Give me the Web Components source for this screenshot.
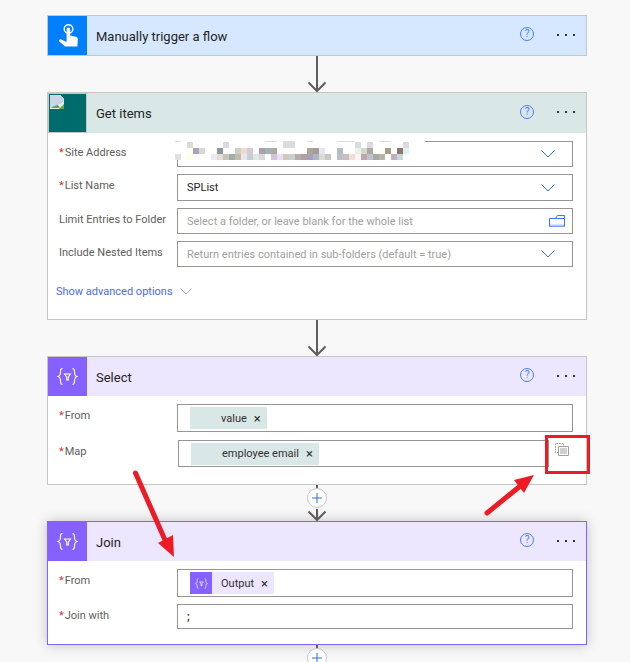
<!DOCTYPE html>
<html>
<head>
<meta charset="utf-8">
<title>Flow</title>
<style>
html, body { margin: 0; height: 662px; overflow: hidden; background: #f8f8f8; }
body { font-family: Roboto, "Open Sans", sans-serif; position: relative; }
flow-page { padding: 15px 0 0 47px; width: 540px; }
svg { display: block; }
</style>
</head>
<body>
<flow-page>
	<flow-card heading="Manually trigger a flow" accent="#007fff" tint="#d6e8ff" head="39">
		<svg slot="icon" width="24" height="26" viewBox="0 0 24 26">
			<circle cx="12.5" cy="6" r="4.3" fill="none" stroke="#fff" stroke-width="1.4"/>
			<path d="M10.6 6.2a1.8 1.8 0 0 1 3.6 0v6.4l5.6 1.2c1.5.4 2.1 1.3 2 2.7l-.4 7H9.2L3.4 18.4c-1-1.2.4-2.8 1.9-2l5.3 2.6z" fill="#fff"/>
		</svg>
	</flow-card>
	<flow-connector></flow-connector>
	<flow-card heading="Get items" accent="#006b6b" tint="#d9e7e6" head="40" framed>
		<svg slot="icon" width="37" height="38" viewBox="0 0 37 38">
			<path d="M1 1h10l4 4v10H1z" fill="#e8eef5"/>
			<path d="M11 1v4h4" fill="#fff" stroke="#a9b4c0" stroke-width=".8"/>
			<path d="M2 14l4-5 3 2 2 3z" fill="#5fa83f"/>
			<path d="M1 1h10l4 4-3 5-4 1-7 3z" fill="#c9d6e6"/>
			<path d="M10 15l5-5v5z" fill="#5fa83f"/>
		</svg>
		<flow-row label="Site Address" required h="26"><blur-patch></blur-patch><flow-chevron slot="end"></flow-chevron></flow-row>
		<flow-row label="List Name" required h="27"><span class="v">SPList</span><flow-chevron slot="end"></flow-chevron></flow-row>
		<flow-row label="Limit Entries to Folder" h="26" hint="Select a folder, or leave blank for the whole list">
			<svg slot="end" width="16" height="12" viewBox="0 0 16 12" fill="none" stroke="#3f74f5">
				<path d="M.5 3.5h15M.5 11.5V3.5M.5 11.5h15V.5H8.5l-2 3" />
				<path d="M1 10.5h14" stroke="#b6c8fb" stroke-width="2"/>
			</svg>
		</flow-row>
		<flow-row label="Include Nested Items" h="26" hint="Return entries contained in sub-folders (default = true)"><flow-chevron slot="end"></flow-chevron></flow-row>
		<flow-advanced slot="foot"></flow-advanced>
	</flow-card>
	<flow-connector></flow-connector>
	<flow-card heading="Select" accent="#8661ff" tint="#ece7fe" head="39" pad-bottom="17">
		<flow-funnel slot="icon"></flow-funnel>
		<flow-row label="From" required h="28" gap="8"><flow-token>value</flow-token></flow-row>
		<flow-row label="Map" required h="27" narrow>
			<flow-token>employee email</flow-token>
			<svg slot="after" width="14" height="13" viewBox="0 0 14 13" fill="none" stroke="#a19f9d">
				<path d="M3.5 9.5h-3v-9h8v2" stroke-dasharray="1.6 1"/>
				<path d="M3.5 3.5h10v9h-10zM5 6h7M5 8h7M5 10h7"/>
			</svg>
		</flow-row>
	</flow-card>
	<flow-connector plus></flow-connector>
	<flow-card heading="Join" accent="#8661ff" tint="#ece7fe" head="39" selected pad-bottom="15">
		<flow-funnel slot="icon"></flow-funnel>
		<flow-row label="From" required h="28"><flow-token variant="output">Output</flow-token></flow-row>
		<flow-row label="Join with" required h="25"><span class="v semi">;</span></flow-row>
	</flow-card>
	<flow-connector plus></flow-connector>
</flow-page>
<red-marks></red-marks>

<script>
class FlowPage extends HTMLElement {
	connectedCallback() {
		this.attachShadow({ mode: "open" }).innerHTML = `
			<style>:host { display: flex; flex-direction: column; }</style>
			<slot></slot>`;
	}
}

class FlowCard extends HTMLElement {
	getStyles() {
		const accent = this.getAttribute("accent");
		const selected = this.hasAttribute("selected");
		return `
			<style>
				:host {
					display: block;
					background: #fff;
					border: 1px solid ${selected ? "#8661ff" : "#c8c6c4"};
					${selected ? "box-shadow: 0 0 12px rgba(0,0,0,.22);" : ""}
				}
				header {
					display: flex;
					align-items: center;
					height: ${this.getAttribute("head")}px;
					background: ${this.getAttribute("tint")};
				}
				.icon {
					width: ${this.hasAttribute("framed") ? 37 : 39}px;
					height: ${this.hasAttribute("framed") ? 38 : 39}px;
					background: ${accent};
					display: flex;
					align-items: center;
					justify-content: center;
					flex: none;
					${this.hasAttribute("framed") ? "border: 1px solid #c8c6c4;" : ""}
				}
				h2 {
					flex: 1;
					margin: ${this.hasAttribute("framed") ? 0 : 2}px 0 0 9px;
					font: 400 13px Roboto, sans-serif;
					color: #252423;
				}
				.help {
					width: 12px;
					height: 12px;
					border: 1px solid #4a7eff;
					border-radius: 50%;
					color: #4a7eff;
					font: 400 10px/12px Roboto, sans-serif;
					text-align: center;
					margin-bottom: 3px;
				}
				.more {
					display: flex;
					gap: 6px;
					margin: 0 11px 2px 23px;
				}
				.more i { width: 2px; height: 2px; background: #323130; }
				main {
					display: flex;
					flex-direction: column;
					padding: 8px 13px ${this.getAttribute("pad-bottom") || 0}px 11px;
				}
			</style>`;
	}
	render() {
		const hasBody = this.querySelector("flow-row");
		this.shadowRoot.innerHTML = `
			${this.getStyles()}
			<header>
				<div class="icon"><slot name="icon"></slot></div>
				<h2>${this.getAttribute("heading")}</h2>
				<div class="help">?</div>
				<div class="more"><i></i><i></i><i></i></div>
			</header>
			${hasBody ? "<main><slot></slot></main>" : ""}
			<slot name="foot"></slot>`;
	}
	connectedCallback() {
		this.attachShadow({ mode: "open" });
		this.render();
	}
}

class FlowRow extends HTMLElement {
	connectedCallback() {
		const h = this.getAttribute("h");
		const hint = this.getAttribute("hint");
		const narrow = this.hasAttribute("narrow");
		const star = this.hasAttribute("required");
		const last = !this.nextElementSibling || this.nextElementSibling.tagName !== "FLOW-ROW";
		this.attachShadow({ mode: "open" }).innerHTML = `
			<style>
				:host {
					display: flex;
					align-items: flex-start;
					margin-bottom: ${last ? 0 : this.getAttribute("gap") || 7}px;
				}
				.label {
					width: 118px;
					flex: none;
					box-sizing: border-box;
					padding-top: 4px;
					font: 400 11px/16px Roboto, sans-serif;
					color: #605e5c;
					white-space: nowrap;
				}
				.label b { font-weight: 400; color: #d13438; margin-right: 1px; }
				.box {
					box-sizing: border-box;
					height: ${h}px;
					width: ${narrow ? 371 : 396}px;
					${narrow ? "margin-left: 1px;" : ""}
					flex: none;
					border: 1px solid #979593;
					background: #fff;
					display: flex;
					align-items: center;
					position: relative;
				}
				.content { flex: 1; padding-left: 9px; color: #252423; font: 400 11px Roboto, sans-serif; display: flex; align-items: center; height: 100%; }
				.hint { color: #a19f9d; }
				.end { margin-right: 7px; display: flex; }
				.after { margin: 3px 0 0 6px; }
				::slotted(flow-token) { margin-left: 3px; }
				::slotted(.semi) { color: #6b3410; font-weight: 700; }
			</style>
			<div class="label">${star ? "<b>*</b>" : ""}${this.getAttribute("label")}</div>
			<div class="box">
				<div class="content">${hint ? `<span class="hint">${hint}</span>` : "<slot></slot>"}</div>
				<div class="end"><slot name="end"></slot></div>
			</div>
			<div class="after"><slot name="after"></slot></div>`;
	}
}

class FlowChevron extends HTMLElement {
	connectedCallback() {
		const inline = this.hasAttribute("inline");
		this.attachShadow({ mode: "open" }).innerHTML = `
			<style>:host { display: block; margin-right: ${inline ? 0 : 10}px; } svg { display: block; }</style>
			<svg width="${inline ? 12 : 14}" height="${inline ? 7 : 8}" viewBox="0 0 14 8" fill="none" stroke="${this.getAttribute("color") || "#2a6fff"}">
				<path d="M.5.5L7 7l6.5-6.5"/>
			</svg>`;
	}
}

class FlowAdvanced extends HTMLElement {
	connectedCallback() {
		this.attachShadow({ mode: "open" }).innerHTML = `
			<style>
				:host {
					display: flex;
					align-items: center;
					gap: 7px;
					height: 52px;
					padding: 0 0 3px 8px;
					box-sizing: border-box;
					font: 400 11px Roboto, sans-serif;
					color: #4f6bed;
				}
			</style>
			<span>Show advanced options</span>
			<flow-chevron inline color="#8aa0f2"></flow-chevron>`;
	}
}

class FlowFunnel extends HTMLElement {
	connectedCallback() {
		const size = this.getAttribute("size") || 21;
		this.attachShadow({ mode: "open" }).innerHTML = `
			<style>:host { display: block; } svg { display: block; }</style>
			<svg width="${size}" height="${size}" viewBox="0 0 21 21" fill="none" stroke="#fff" stroke-width="1.1">
				<path d="M5.5 2.5c-1.8 0-2 1-2 3.2s-.3 4.2-2.5 4.8c2.200.600 2.500 2.600 2.500 4.800s.2 3.200 2 3.200"/>
				<path d="M15.500 2.500c1.800 0 2 1 2 3.200s.3 4.200 2.500 4.800c-2.200.600-2.500 2.600-2.500 4.800s-.2 3.200-2 3.200"/>
				<path d="M7.500 8h6l-2.200 3v3h-1.600v-3z"/>
			</svg>`;
	}
}

class FlowToken extends HTMLElement {
	connectedCallback() {
		const output = this.getAttribute("variant") === "output";
		this.attachShadow({ mode: "open" }).innerHTML = `
			<style>
				:host {
					display: flex;
					align-items: center;
					height: 22px;
					background: ${output ? "#ece7fe" : "#d9e7e6"};
					color: #323130;
					font: 400 11px Roboto, sans-serif;
				}
				.pic {
					width: 22px;
					height: 22px;
					margin-right: 9px;
					display: flex;
					align-items: center;
					justify-content: center;
					${output ? "background: #8661ff;" : ""}
				}
				.x { margin: 0 6px 0 7px; font-size: 13px; line-height: 1; }
			</style>
			<div class="pic">${output ? '<flow-funnel size="13"></flow-funnel>' : ""}</div>
			<slot></slot>
			<span class="x">×</span>`;
	}
}

class FlowConnector extends HTMLElement {
	connectedCallback() {
		const plus = this.hasAttribute("plus");
		this.attachShadow({ mode: "open" }).innerHTML = `
			<style>
				:host { display: block; height: 36px; position: relative; }
				svg { display: block; margin-left: 260px; overflow: visible; }
			</style>
			<svg width="20" height="36" viewBox="0 0 20 36" fill="none">
				${plus
					? `<path d="M10 0v5M10 24v11" stroke="#605e5c" stroke-width="2"/>
					   <circle cx="10" cy="13" r="9.5" fill="#fff" stroke="#c8c6c4"/>
					   <path d="M5 13h10M10 8v10" stroke="#2a6fdf"/>`
					: `<path d="M10 0v35" stroke="#605e5c" stroke-width="2"/>`}
				<path d="M1.500 26.500L10 35l8.500-8.500" stroke="#605e5c" stroke-width="2"/>
			</svg>`;
	}
}

class BlurPatch extends HTMLElement {
	connectedCallback() {
		const rows = [
			"2#dcdcdc 8#dcdcdc 18#dcdcdc 19#dcdcdc 30#dcdcdc 32#dcdcdc 38#dcdcdc",
			"2#fffef0 3#aaa3b5 4#d5dad8 7#8a9a98 10#cfcfc9 11#efdcd0 12#d5ccd0 14#ada0ac 15#a3b0b5 16#a8ad9e 22#ada49c 23#a89c98 24#e0e8f5 27#b5bdc4 30#eaf0ea 31#d8d8c8 32#ada8a0 34#fdfdf0 35#a49c8a 37#8c7868 38#e3eff7",
			"0#e0e0e0 2#fffeea 6#f3e8ee 7#e5dcdc 8#c5c5b8 9#9fb0ab 10#c4bca8 11#ece4ee 12#c4cfd8 13#e0e8e6 14#d8d8d4 16#d2c4dc 17#e8dff0 18#d0c8c0 19#c8d0d0 20#b8aca8 21#b0a09f 22#a8a0b8 23#aab8c4 24#dcdcd4 25#c8c8c8 27#b8c0c8 28#c8c0c0 29#f0e0d8 30#fbf5ee 31#b8a8b0 32#c0c0d0 33#a8a8a4 34#b8b4ac 36#c4b0bc 37#c8d8e0"
		];
		let cells = "";
		rows.forEach((row, r) => row.split(" ").forEach((c) => {
			const [k, col] = c.split("#");
			cells += `<rect x="${k * 6}" y="${1 + r * 6}" width="6" height="6" fill="#${col}"/>`;
		}));
		[0, 15, 16, 18, 19, 22, 27, 28, 29, 34, 35].forEach((k) => {
			cells += `<rect x="${k * 6}" y="0" width="6" height="1" fill="#ddd"/>`;
		});
		this.attachShadow({ mode: "open" }).innerHTML = `
			<style>
				:host { position: absolute; left: -3px; top: -1px; display: block; }
				svg { display: block; background: #fff; }
			</style>
			<svg width="250" height="19" viewBox="0 0 250 19">${cells}</svg>`;
	}
}

class RedMarks extends HTMLElement {
	connectedCallback() {
		this.attachShadow({ mode: "open" }).innerHTML = `
			<style>
				:host { position: absolute; left: 0; top: 0; display: block; pointer-events: none; }
				svg { display: block; }
			</style>
			<svg width="630" height="662" viewBox="0 0 630 662">
				<rect x="546.500" y="436.500" width="42" height="36" fill="none" stroke="#ed1c24" stroke-width="3"/>
				<path d="M135.500 473L165 540" stroke="#ed1c24" stroke-width="5" stroke-linecap="round"/>
				<path d="M174 557L158 543L173 535z" fill="#ed1c24"/>
				<path d="M487 513L519 487" stroke="#ed1c24" stroke-width="5" stroke-linecap="round"/>
				<path d="M534 475L514 480L524 493z" fill="#ed1c24"/>
			</svg>`;
	}
}

customElements.define("flow-page", FlowPage);
customElements.define("flow-card", FlowCard);
customElements.define("flow-row", FlowRow);
customElements.define("flow-chevron", FlowChevron);
customElements.define("flow-advanced", FlowAdvanced);
customElements.define("flow-funnel", FlowFunnel);
customElements.define("flow-token", FlowToken);
customElements.define("flow-connector", FlowConnector);
customElements.define("blur-patch", BlurPatch);
customElements.define("red-marks", RedMarks);
</script>
</body>
</html>
